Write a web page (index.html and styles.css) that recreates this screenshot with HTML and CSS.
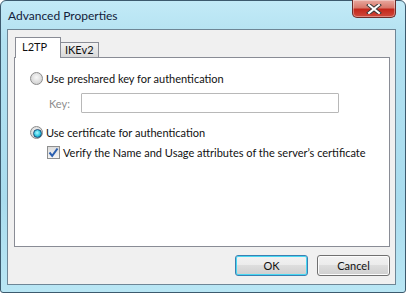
FILE: index.html
```html
<!DOCTYPE html>
<html lang="en">
<head>
  <meta charset="UTF-8" />
  <title>Advanced Properties</title>
  <link rel="stylesheet" href="styles.css">
</head>
<body>
  <div class="window">
    <div class="titlebar">
      <span class="title">Advanced Properties</span>
      <button class="close-btn" title="Close">
        <svg width="16" height="10" viewBox="0 0 16 10">
          <path d="M3 1 L13 9 M13 1 L3 9" stroke="#3b3b3b" stroke-width="4" stroke-linecap="square"/>
          <path d="M3 1 L13 9 M13 1 L3 9" stroke="#fff" stroke-width="2" stroke-linecap="square"/>
        </svg>
      </button>
    </div>

    <div class="client">
      <div class="tabs">
        <div class="tab active">L2TP</div>
        <div class="tab">IKEv2</div>
      </div>

      <div class="panel">
        <label class="row">
          <span class="radio"></span>
          <span>Use preshared key for authentication</span>
        </label>
        <div class="key-row">
          <span class="key-label">Key:</span>
          <span class="key-input"></span>
        </div>
        <label class="row second">
          <span class="radio checked"></span>
          <span>Use certificate for authentication</span>
        </label>
        <label class="row check-row">
          <span class="checkbox">
            <svg width="11" height="11" viewBox="0 0 11 11">
              <path d="M1.5 5.5 L4.2 8.8 L9.5 1.5" fill="none" stroke="#2a5fb0" stroke-width="2"/>
            </svg>
          </span>
          <span>Verify the Name and Usage attributes of the server’s certificate</span>
        </label>
      </div>

      <div class="buttons">
        <button class="btn default">OK</button>
        <button class="btn">Cancel</button>
      </div>
    </div>
  </div>
</body>
</html>
```

FILE: styles.css
```css
* {
  box-sizing: border-box;
}

body {
  margin: 0;
  font-family: Lato, "Noto Sans", Arial, sans-serif;
  font-size: 11px;
  color: #111;
  background: #fff;
}

.window {
  width: 406px;
  height: 293px;
  border: 1px solid #3c5a6e;
  border-radius: 6px 6px 3px 3px;
  background: linear-gradient(#c2eaf7, #b2e1f1 40px, #a9dcee 200px, #b9e6f4);
  display: flex;
  flex-direction: column;
}

.titlebar {
  height: 28px;
  flex-shrink: 0;
  display: flex;
  justify-content: space-between;
  align-items: flex-start;
  padding-left: 7px;
}

.title {
  margin-top: 7px;
  font-size: 12px;
  color: #13213a;
}

.close-btn {
  width: 44px;
  height: 18px;
  margin-right: 9px;
  margin-top: -1px;
  border: 1px solid #6b2d2a;
  border-top: none;
  border-radius: 0 0 5px 5px;
  background: linear-gradient(#e9a99f, #d8786b 45%, #c4271b 55%, #cf4a3c);
  box-shadow: inset 0 0 0 1px rgba(255, 255, 255, 0.35);
  display: flex;
  align-items: center;
  justify-content: center;
  padding: 0;
}

.client {
  height: 256px;
  flex-shrink: 0;
  margin: 0 9px 0 6px;
  border: 1px solid #6e8696;
  background: #f0f0f0;
  display: flex;
  flex-direction: column;
  padding: 7px 5px 8px 6px;
}

.tabs {
  display: flex;
  align-items: flex-end;
  height: 21px;
  flex-shrink: 0;
  margin-bottom: -1px;
  padding-left: 1px;
  position: relative;
  z-index: 1;
}

.tab {
  height: 16px;
  width: 38px;
  padding: 0 0 0 4px;
  border: 1px solid #898c95;
  border-left: none;
  background: linear-gradient(#f3f3f3, #e6e6e6 50%, #d9d9d9);
  line-height: 14px;
}

.tab.active {
  height: 21px;
  width: 46px;
  border-left: 1px solid #898c95;
  border-bottom: none;
  background: #fff;
  line-height: 18px;
  padding: 0 0 0 6px;
}

.panel {
  height: 190px;
  flex-shrink: 0;
  border: 1px solid #898c95;
  background: #fff;
  padding: 14px 15px 0 15px;
}

.row {
  display: flex;
  align-items: center;
  gap: 3px;
  height: 13px;
  white-space: nowrap;
}

.radio {
  width: 13px;
  height: 13px;
  flex-shrink: 0;
  border: 1px solid #8b8b8b;
  border-radius: 50%;
  background: radial-gradient(circle at 50% 40%, #f8f8f8, #d6d6d6 70%, #c4c4c4);
  position: relative;
}

.radio.checked::after {
  content: "";
  position: absolute;
  left: 2px;
  top: 2px;
  width: 7px;
  height: 7px;
  border-radius: 50%;
  border: 1px solid #1b4f7a;
  background: radial-gradient(circle at 45% 40%, #aef8ff, #22c0dc 60%, #0d6f9a);
}

.key-row {
  display: flex;
  align-items: center;
  margin-top: 8px;
  padding-left: 19px;
}

.key-label {
  width: 32px;
  color: #8d8d8d;
}

.key-input {
  width: 258px;
  height: 20px;
  border: 1px solid #b8b8b8;
  border-radius: 1px;
  background: #fff;
}

.row.second {
  margin-top: 13px;
}

.check-row {
  margin-top: 7px;
  padding-left: 17px;
}

.checkbox {
  width: 13px;
  height: 13px;
  flex-shrink: 0;
  border: 1px solid #8e8f8f;
  background: linear-gradient(#dcdcdc, #f5f5f5);
  display: flex;
  align-items: center;
  justify-content: center;
}

.buttons {
  display: flex;
  justify-content: flex-end;
  gap: 9px;
  margin-top: 8px;
}

.btn {
  width: 73px;
  height: 21px;
  border: 1px solid #707070;
  border-radius: 3px;
  background: linear-gradient(#f2f2f2, #ebebeb 50%, #dddddd 50%, #cfcfcf);
  font-family: inherit;
  font-size: 11px;
  color: #111;
  padding: 0;
  box-shadow: inset 0 0 0 1px #fcfcfc;
}

.btn.default {
  border-color: #3c7fb1;
  box-shadow: inset 0 0 0 1px #48d8f3;
}
```
